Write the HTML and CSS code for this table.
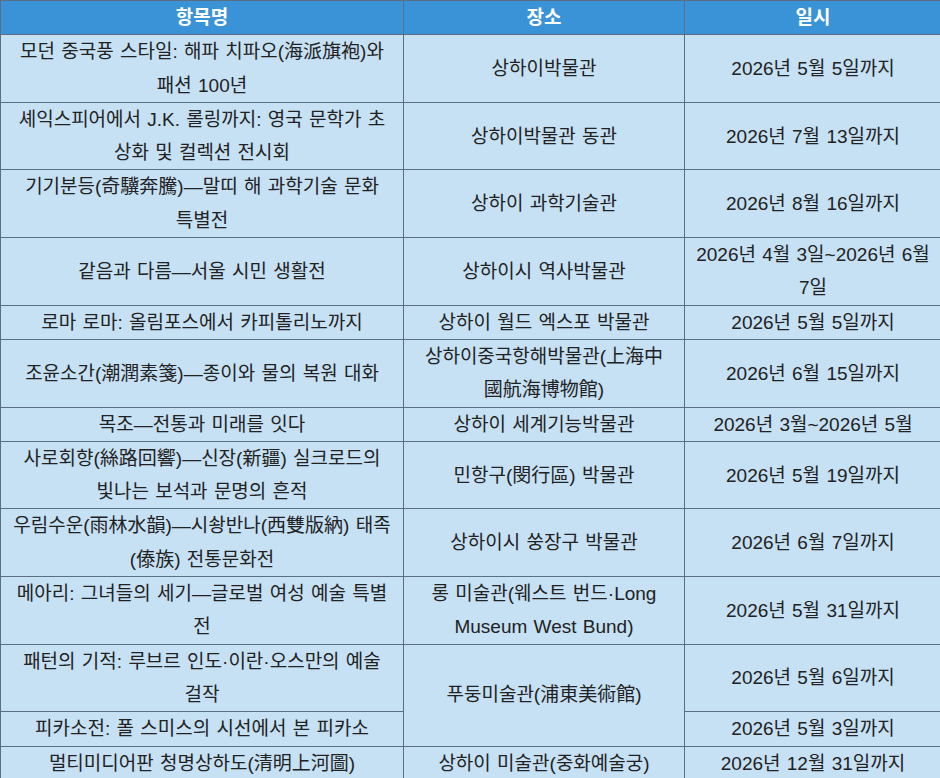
FILE: index.html
```html
<!DOCTYPE html>
<html lang="ko">
<head>
<meta charset="utf-8">
<link rel="stylesheet" href="styles.css">
</head>
<body>
<table class="events">
  <colgroup>
    <col class="c-name">
    <col class="c-place">
    <col class="c-date">
  </colgroup>
  <thead>
    <tr><th>항목명</th><th>장소</th><th>일시</th></tr>
  </thead>
  <tbody>
    <tr><td>모던 중국풍 스타일: 해파 치파오(海派旗袍)와<br>패션 100년</td><td>상하이박물관</td><td>2026년 5월 5일까지</td></tr>
    <tr><td>셰익스피어에서 J.K. 롤링까지: 영국 문학가 초<br>상화 및 컬렉션 전시회</td><td>상하이박물관 동관</td><td>2026년 7월 13일까지</td></tr>
    <tr><td>기기분등(奇驥奔騰)—말띠 해 과학기술 문화<br>특별전</td><td>상하이 과학기술관</td><td>2026년 8월 16일까지</td></tr>
    <tr><td>같음과 다름—서울 시민 생활전</td><td>상하이시 역사박물관</td><td>2026년 4월 3일~2026년 6월<br>7일</td></tr>
    <tr><td>로마 로마: 올림포스에서 카피톨리노까지</td><td>상하이 월드 엑스포 박물관</td><td>2026년 5월 5일까지</td></tr>
    <tr><td>조윤소간(潮潤素箋)—종이와 물의 복원 대화</td><td>상하이중국항해박물관(上海中<br>國航海博物館)</td><td>2026년 6월 15일까지</td></tr>
    <tr><td>목조—전통과 미래를 잇다</td><td>상하이 세계기능박물관</td><td>2026년 3월~2026년 5월</td></tr>
    <tr><td>사로회향(絲路回響)—신장(新疆) 실크로드의<br>빛나는 보석과 문명의 흔적</td><td>민항구(閔行區) 박물관</td><td>2026년 5월 19일까지</td></tr>
    <tr><td>우림수운(雨林水韻)—시솽반나(西雙版納) 태족<br>(傣族) 전통문화전</td><td>상하이시 쑹장구 박물관</td><td>2026년 6월 7일까지</td></tr>
    <tr><td>메아리: 그녀들의 세기—글로벌 여성 예술 특별<br>전</td><td>롱 미술관(웨스트 번드·Long<br>Museum West Bund)</td><td>2026년 5월 31일까지</td></tr>
    <tr><td>패턴의 기적: 루브르 인도·이란·오스만의 예술<br>걸작</td><td rowspan="2">푸둥미술관(浦東美術館)</td><td>2026년 5월 6일까지</td></tr>
    <tr><td>피카소전: 폴 스미스의 시선에서 본 피카소</td><td>2026년 5월 3일까지</td></tr>
    <tr><td>멀티미디어판 청명상하도(清明上河圖)</td><td>상하이 미술관(중화예술궁)</td><td>2026년 12월 31일까지</td></tr>
  </tbody>
</table>
</body>
</html>
```

FILE: styles.css
```css
html, body {
  margin: 0;
  padding: 0;
  background: #c6e0f4;
}
body {
  width: 940px;
  height: 778px;
  overflow: hidden;
}
.events {
  border-collapse: collapse;
  table-layout: fixed;
  width: 941px;
  font-family: "Liberation Sans", Arial, "Noto Sans CJK KR", sans-serif;
  font-size: 19px;
  color: #222;
}
.c-name { width: 403px; }
.c-place { width: 281px; }
.c-date { width: 257px; }
.events th,
.events td {
  border: 1px solid #5b6f82;
  padding: 0 2px;
  text-align: center;
  vertical-align: middle;
  line-height: 33.3px;
  white-space: nowrap;
  word-spacing: 1px;
}
.events th {
  background: #3a93d6;
  color: #fff;
  font-weight: bold;
}
.events td {
  background: #c6e0f4;
}
```
